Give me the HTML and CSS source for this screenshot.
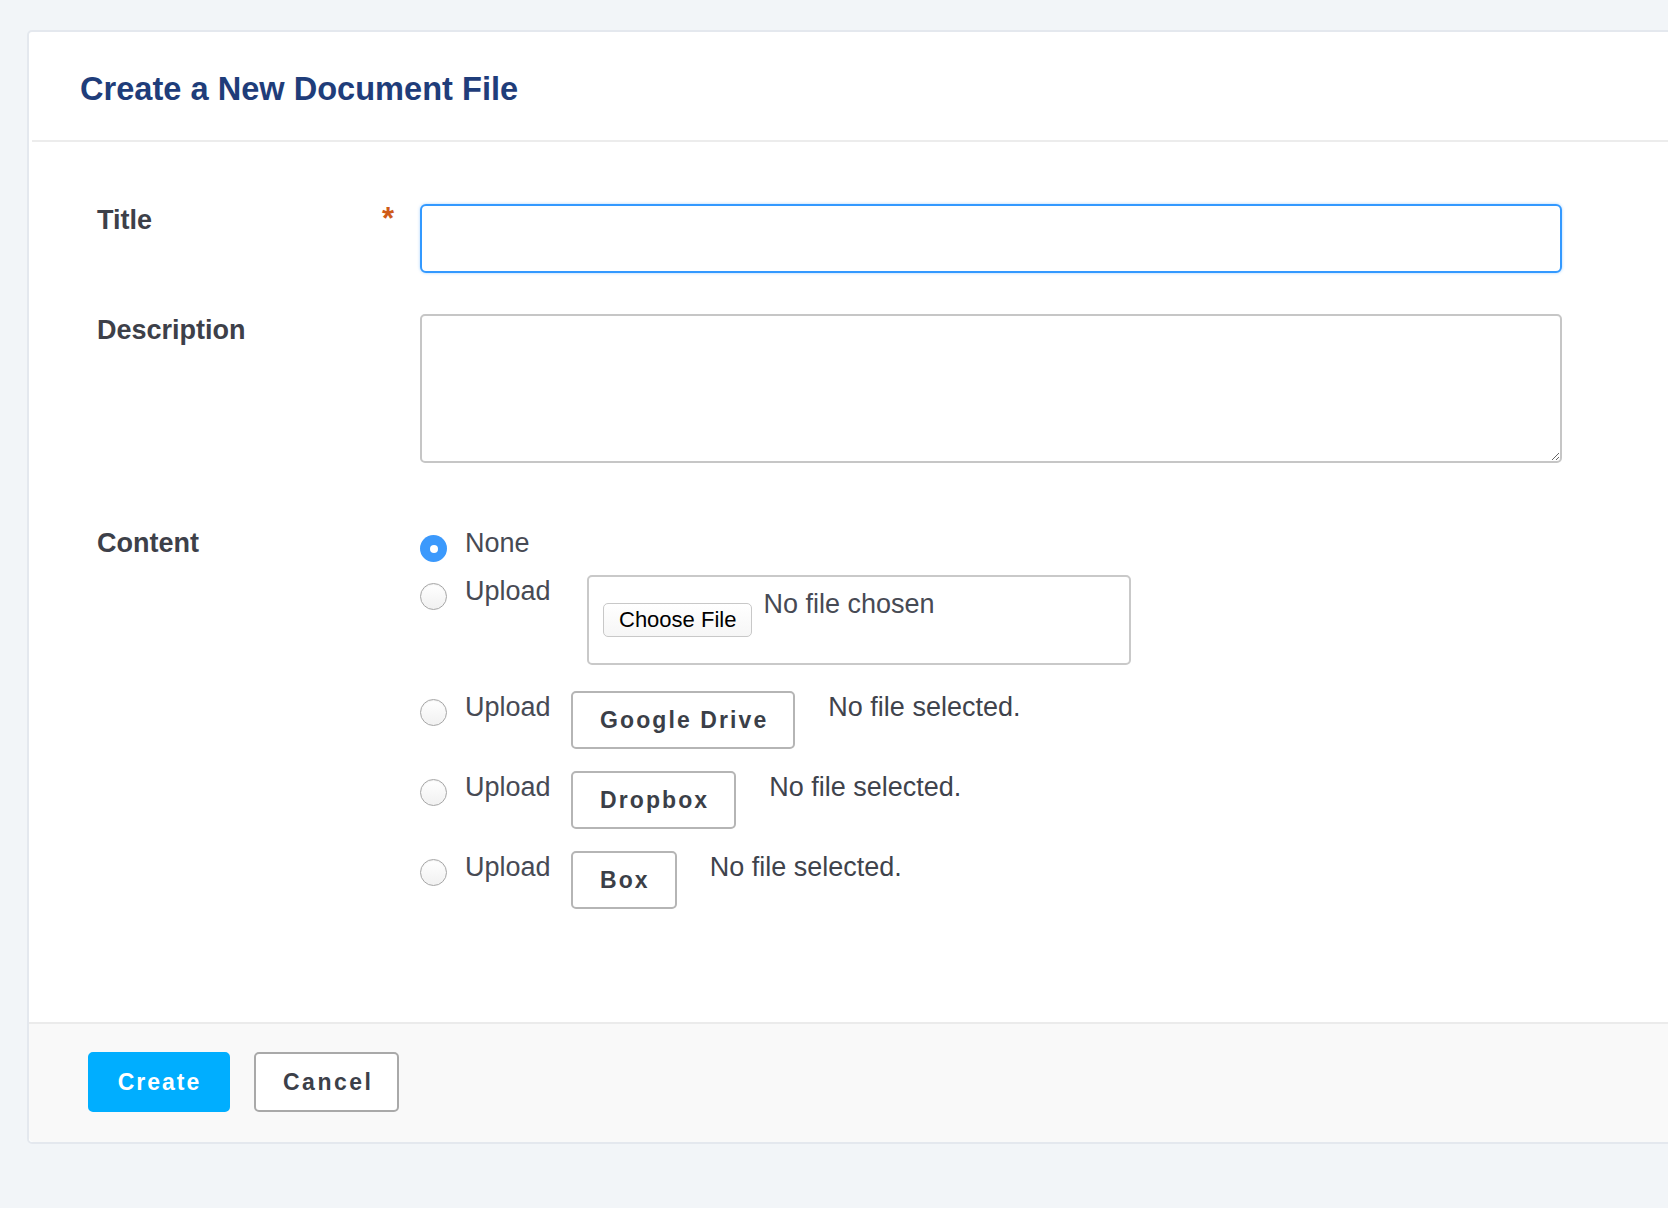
FILE: index.html
```html
<!DOCTYPE html>
<html lang="en">
<head>
<meta charset="utf-8">
<title>Create a New Document File</title>
<link rel="stylesheet" href="styles.css">
</head>
<body>
<div class="page">
  <div class="card">
    <div class="card-header">
      <h1 class="card-title">Create a New Document File</h1>
    </div>
    <div class="card-body">
      <div class="form-row">
        <div class="form-label"><span>Title</span><span class="required">*</span></div>
        <div class="form-field">
          <input class="text-input" type="text">
        </div>
      </div>
      <div class="form-row form-row-desc">
        <div class="form-label"><span>Description</span></div>
        <div class="form-field">
          <textarea class="textarea"></textarea>
        </div>
      </div>
      <div class="form-row form-row-content">
        <div class="form-label"><span>Content</span></div>
        <div class="form-field options">
          <label class="option option-none">
            <span class="radio radio-checked"></span>
            <span class="option-text">None</span>
          </label>
          <div class="option option-file">
            <span class="radio"></span>
            <span class="option-text">Upload</span>
            <div class="filebox">
              <span class="choose-btn">Choose File</span>
              <span class="file-status">No file chosen</span>
            </div>
          </div>
          <div class="option option-cloud">
            <span class="radio"></span>
            <span class="option-text">Upload</span>
            <span class="cloud-btn">Google Drive</span>
            <span class="cloud-status">No file selected.</span>
          </div>
          <div class="option option-cloud">
            <span class="radio"></span>
            <span class="option-text">Upload</span>
            <span class="cloud-btn">Dropbox</span>
            <span class="cloud-status">No file selected.</span>
          </div>
          <div class="option option-cloud">
            <span class="radio"></span>
            <span class="option-text">Upload</span>
            <span class="cloud-btn">Box</span>
            <span class="cloud-status">No file selected.</span>
          </div>
        </div>
      </div>
    </div>
    <div class="card-footer">
      <button class="btn btn-primary" type="button">Create</button>
      <button class="btn btn-default" type="button">Cancel</button>
    </div>
  </div>
</div>
</body>
</html>
```
FILE: styles.css
```css
html, body {
  margin: 0;
  padding: 0;
  background: #f2f5f8;
  overflow: hidden;
}
body {
  font-family: "Liberation Sans", Arial, Helvetica, sans-serif;
  color: #3d4049;
  width: 1668px;
  height: 1208px;
}
.page {
  padding: 30px 0 0 27px;
}
.card {
  width: 1720px;
  background: #ffffff;
  border: 2px solid #e4e8ee;
  border-radius: 5px;
}
.card-header {
  margin-left: 3px;
  padding: 38px 0 32px 48px;
  border-bottom: 2px solid #ececec;
}
.card-title {
  margin: 0;
  font-size: 32.6px;
  line-height: 38px;
  font-weight: bold;
  color: #1f3d7a;
}
.card-body {
  padding: 62px 0 113px 68px;
}
.form-row {
  display: flex;
  align-items: flex-start;
}
.form-row-desc {
  margin-top: 41px;
}
.form-row-content {
  margin-top: 64px;
}
.form-label {
  width: 323px;
  flex: none;
  display: flex;
  justify-content: space-between;
  font-size: 27px;
  line-height: 32px;
  font-weight: bold;
  color: #3d4049;
}
.required {
  color: #cf5b18;
  font-size: 31px;
  line-height: 30px;
  margin-right: 26px;
}
.form-field {
  width: 1142px;
}
.text-input {
  display: block;
  box-sizing: border-box;
  width: 1142px;
  height: 69px;
  margin: 0;
  border: 2px solid #3399ff;
  border-radius: 6px;
  box-shadow: 0 0 3px rgba(51, 153, 255, 0.45);
  outline: none;
  background: #fff;
}
.textarea {
  display: block;
  box-sizing: border-box;
  width: 1142px;
  height: 149px;
  margin: 0;
  border: 2px solid #c6c6c6;
  border-radius: 5px;
  outline: none;
  background: #fff;
}
.options {
  display: flex;
  flex-direction: column;
}
.option {
  display: flex;
  align-items: flex-start;
  font-size: 27px;
  line-height: 32px;
  color: #474a54;
}
.option-none {
  margin-bottom: 13px;
}
.option-file {
  margin-bottom: 26px;
}
.option-cloud {
  margin-bottom: 22px;
}
.option-cloud:last-child {
  margin-bottom: 0;
}
.radio {
  box-sizing: border-box;
  flex: none;
  width: 27px;
  height: 27px;
  margin-top: 8px;
  border-radius: 50%;
  border: 1px solid #a6a6a6;
  background: linear-gradient(#ffffff, #f1f1f1);
  box-shadow: inset 0 1px 1px rgba(0, 0, 0, 0.06);
  position: relative;
}
.radio-checked {
  border: none;
  background: #3b99fc;
  box-shadow: none;
}
.radio-checked::after {
  content: "";
  position: absolute;
  left: 9.5px;
  top: 9.5px;
  width: 8px;
  height: 8px;
  border-radius: 50%;
  background: #ffffff;
}
.option-text {
  margin-left: 18px;
  width: 82px;
  flex: none;
}
.filebox {
  box-sizing: border-box;
  width: 544px;
  height: 90px;
  margin-left: 40px;
  border: 2px solid #c9c9c9;
  border-radius: 5px;
  display: flex;
  align-items: flex-start;
  padding-left: 14px;
}
.choose-btn {
  box-sizing: border-box;
  margin-top: 26px;
  height: 34px;
  padding: 0 15px;
  border: 1px solid #c8c8c8;
  border-radius: 5px;
  background: linear-gradient(#ffffff, #f6f6f6);
  font-size: 22px;
  line-height: 32px;
  color: #000;
}
.file-status {
  margin-top: 11px;
  margin-left: 11px;
  color: #474a54;
}
.cloud-btn {
  box-sizing: border-box;
  height: 58px;
  margin-left: 24px;
  padding: 0 25px 0 27px;
  border: 2px solid #b5b5b5;
  border-radius: 5px;
  background: #fff;
  font-size: 23px;
  line-height: 54px;
  font-weight: bold;
  letter-spacing: 2.1px;
  color: #3b3f48;
}
.cloud-status {
  margin-left: 33px;
  color: #3f434c;
}
.card-footer {
  background: #f9f9f9;
  border-top: 2px solid #ebebeb;
  padding: 28px 0 30px 59px;
  display: flex;
  gap: 24px;
  border-radius: 0 0 5px 5px;
}
.btn {
  box-sizing: border-box;
  height: 60px;
  margin: 0;
  padding: 0 26px 0 27px;
  border-radius: 5px;
  font-family: "Liberation Sans", Arial, Helvetica, sans-serif;
  font-size: 23px;
  font-weight: bold;
  cursor: pointer;
}
.btn-primary {
  width: 142px;
  border: 2px solid #00aeff;
  background: #00aeff;
  color: #ffffff;
  letter-spacing: 2px;
}
.btn-default {
  width: 145px;
  border: 2px solid #a9a9a9;
  background: #ffffff;
  color: #3c4049;
  letter-spacing: 2.5px;
}
```
